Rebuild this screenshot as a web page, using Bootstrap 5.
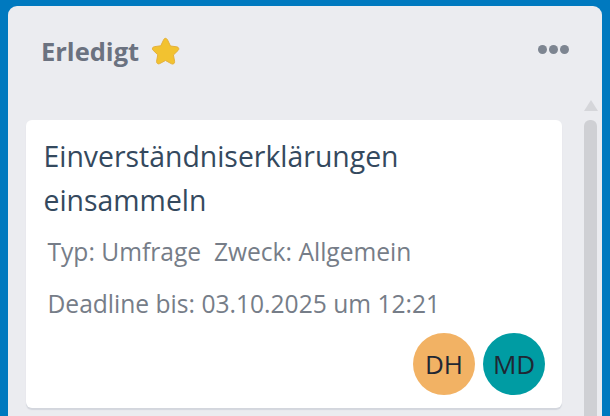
<!DOCTYPE html>
<html lang="de">
<head>
  <meta charset="UTF-8" />
  <title>Erledigt</title>
  <link href="https://cdn.jsdelivr.net/npm/bootstrap@5.3.3/dist/css/bootstrap.min.css" rel="stylesheet" />
  <style>
    html, body { height: 416px; overflow: hidden; }
    body {
      background-color: #0079bf;
      font-family: "Open Sans", "Noto Sans", sans-serif;
      padding: 6px 8px 0 8px;
    }
    .board-col {
      background-color: #ebecf0;
      border-radius: 9px 9px 0 0;
      height: 410px;
      padding: 0 5px 0 18px;
    }
    .col-head { height: 114px; padding: 26px 28px 0 15px; }
    .col-title { font-size: 25.5px; font-weight: 700; color: #6b7280; gap: 11px; }
    .more-dots { gap: 2px; margin-top: 13px; }
    .more-dots i { width: 9px; height: 9px; border-radius: 50%; background: #7d8591; display: block; }
    .col-scroll { gap: 22px; }
    .task-card {
      width: 536px;
      height: 288px;
      border: 0;
      border-radius: 6px;
      box-shadow: 0 2px 1px #d3d6dd;
      padding: 14px 18px 0 17.500px;
    }
    .task-title { font-size: 28.4px; line-height: 44px; color: #34495e; margin: 0 0 15px; }
    .task-meta { font-size: 24.600px; line-height: 30px; color: #767d88; margin: 0 0 22px 4px; white-space: nowrap; }
    .avatars { gap: 8px; margin-right: -1px; margin-top: -8px; }
    .avatar-dot {
      width: 62px; height: 62px; border-radius: 50%;
      color: #1f2733; font-size: 26px;
    }
    .bg-dh { background: #f2b264; }
    .bg-md { background: #009ca3; }
    .scroll-track { width: 13px; margin-top: -20px; }
    .scroll-up { width: 0; height: 0; border-left: 7px solid transparent; border-right: 7px solid transparent; border-bottom: 11px solid #d5d6da; }
    .scroll-thumb { width: 13px; flex: 1; margin-top: 9px; background: #cfd0d4; border-radius: 6px 6px 0 0; }
  </style>
</head>
<body>
  <div class="board-col d-flex flex-column">
    <div class="col-head d-flex justify-content-between align-items-start">
      <div class="col-title d-flex align-items-center">
        Erledigt
        <svg width="31" height="31" viewBox="0 0 32 32" aria-hidden="true">
          <path d="M16 2.500c1 0 1.700.6 2.200 1.700l2.900 6.100 6.600.9c2 .3 2.700 2.300 1.300 3.700l-4.800 4.700 1.200 6.700c.3 2-1.500 3.300-3.200 2.400L16 25.300l-6 3.200c-1.700.9-3.500-.4-3.200-2.400l1.200-6.700-4.800-4.700c-1.400-1.400-.7-3.400 1.300-3.700l6.600-.9 2.900-6.100c.5-1.100 1.200-1.700 2-1.700z" fill="#f2c230" stroke="#e3ae3a" stroke-width="1"/>
        </svg>
      </div>
      <div class="more-dots d-flex"><i></i><i></i><i></i></div>
    </div>
    <div class="col-scroll d-flex flex-grow-1">
      <div class="card task-card">
        <h5 class="task-title fw-normal">Einverständniserklärungen einsammeln</h5>
        <p class="task-meta">Typ: Umfrage&nbsp; Zweck: Allgemein</p>
        <p class="task-meta">Deadline bis: 03.10.2025 um 12:21</p>
        <div class="avatars d-flex justify-content-end">
          <div class="avatar-dot bg-dh d-flex align-items-center justify-content-center">DH</div>
          <div class="avatar-dot bg-md d-flex align-items-center justify-content-center">MD</div>
        </div>
      </div>
      <div class="scroll-track d-flex flex-column align-items-center">
        <div class="scroll-up"></div>
        <div class="scroll-thumb"></div>
      </div>
    </div>
  </div>
  <script src="https://cdn.jsdelivr.net/npm/bootstrap@5.3.3/dist/js/bootstrap.bundle.min.js"></script>
</body>
</html>
